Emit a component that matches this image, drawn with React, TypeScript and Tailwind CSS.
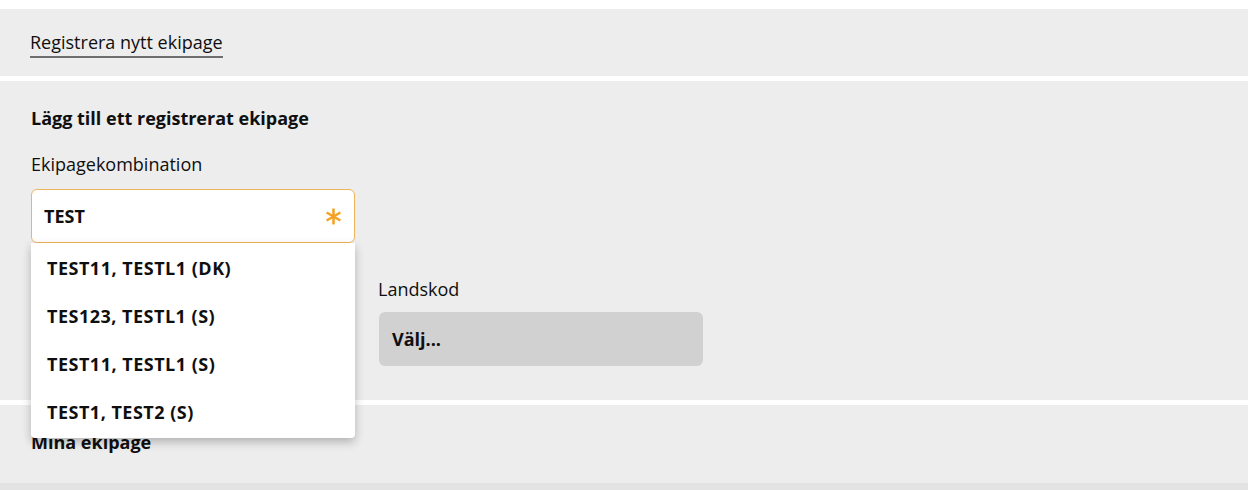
import React from "react";

const options = ["TEST11, TESTL1 (DK)", "TES123, TESTL1 (S)", "TEST11, TESTL1 (S)", "TEST1, TEST2 (S)"];

function Asterisk() {
  return (
    <svg width="17" height="17" viewBox="0 0 16 16" className="text-[#f5a122]">
      <g stroke="currentColor" strokeWidth="2.4" strokeLinecap="butt">
        <line x1="8" y1="0.5" x2="8" y2="15.5" />
        <line x1="1.5" y1="4.25" x2="14.5" y2="11.75" />
        <line x1="1.5" y1="11.75" x2="14.5" y2="4.25" />
      </g>
    </svg>
  );
}

export default function App() {
  return (
    <div className="w-[1248px] h-[490px] bg-white pt-[9px] flex flex-col gap-[5px] overflow-hidden text-[#0f0f0f] font-['Open_Sans',sans-serif] text-[18px] leading-6">
      {/* Register new */}
      <div className="bg-[#ededed] h-[67px] pl-[30px] pt-[21px]">
        <span className="inline-block border-b-2 border-[#6e6e6e] pb-[2px]">Registrera nytt ekipage</span>
      </div>

      {/* Add registered */}
      <div className="bg-[#ededed] h-[319px] pl-[31px] pt-[25px]">
        <h2 className="font-bold">Lägg till ett registrerat ekipage</h2>
        <div className="mt-[22px]">Ekipagekombination</div>
        <div className="relative w-[324px] mt-[13px] z-10">
          <div className="h-[54px] bg-white border border-[#f0b55c] rounded-[6px] flex items-center justify-between pl-3 pr-[12px]">
            <span className="font-bold">TEST</span>
            <Asterisk />
          </div>
          <div className="absolute left-0 top-full w-full bg-white rounded-b-[4px] shadow-[0_4px_10px_rgba(0,0,0,0.25)] pt-[1px] pb-[2px]">
            {options.map((o) => (
              <div key={o} className="h-12 flex items-center px-4 font-bold tracking-[0.5px]">
                {o}
              </div>
            ))}
          </div>
        </div>
        <div className="grid grid-cols-[324px_324px] gap-x-6 mt-[34px]">
          <div>
            <div className="h-6" />
            <div className="mt-[11px] h-[54px] bg-white rounded-[6px]" />
          </div>
          <div>
            <div className="-ml-px">Landskod</div>
            <div className="mt-[11px] h-[54px] bg-[#d1d1d1] rounded-[6px] flex items-center pl-[13px] font-bold">
              Välj...
            </div>
          </div>
        </div>
      </div>

      {/* My teams */}
      <div className="bg-[#ededed] h-[78px] pl-[31px] pt-[25px]">
        <h2 className="font-bold">Mina ekipage</h2>
      </div>
      <div className="bg-[#e3e3e3] h-[7px] -mt-[5px]" />
    </div>
  );
}
